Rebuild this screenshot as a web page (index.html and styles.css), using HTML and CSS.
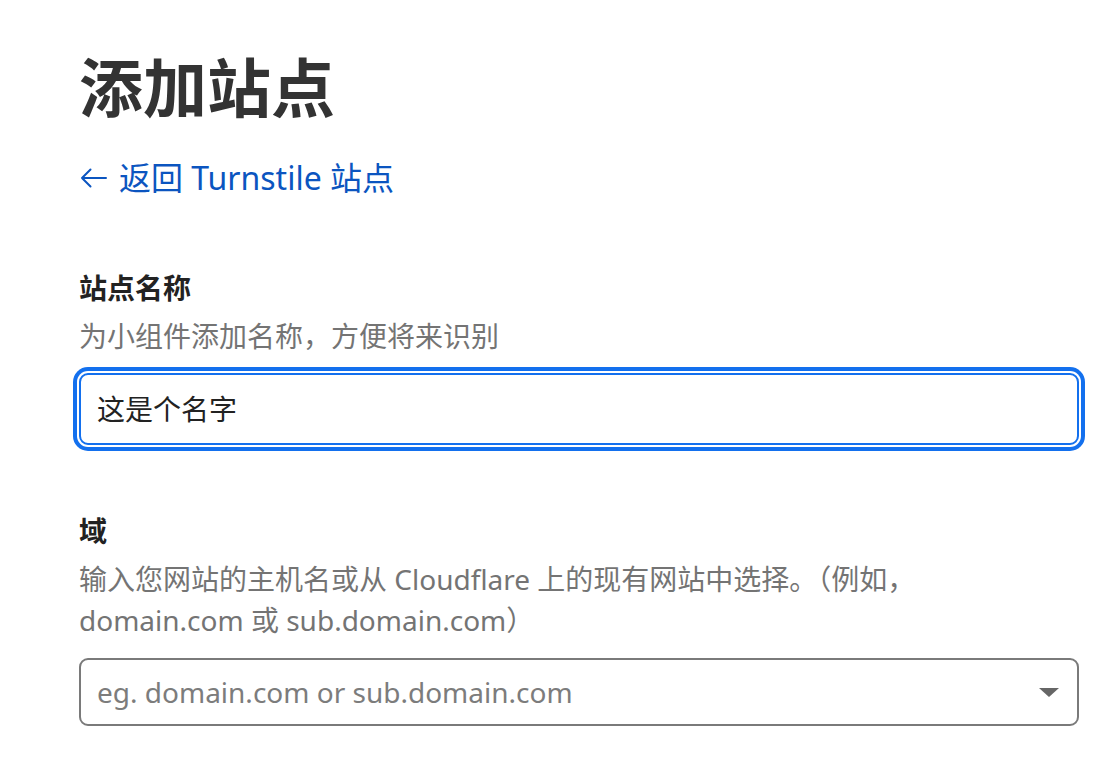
FILE: index.html
```html
<!DOCTYPE html>
<html lang="zh-CN">
<head>
<meta charset="utf-8">
<title>添加站点</title>
<link rel="stylesheet" href="styles.css">
</head>
<body>
<main class="page">
  <h1 class="title">添加站点</h1>
  <a class="back-link" href="#">
    <svg class="back-arrow" width="27" height="20" viewBox="0 0 27 20" aria-hidden="true">
      <path d="M26 10H2M10.5 1.5L2 10l8.5 8.5" fill="none" stroke="currentColor" stroke-width="2" stroke-linecap="round" stroke-linejoin="round"/>
    </svg>
    <span>返回 Turnstile 站点</span>
  </a>

  <section class="field field-name">
    <label class="field-label" for="site-name">站点名称</label>
    <p class="field-desc">为小组件添加名称，方便将来识别</p>
    <div class="input-box input-focused">
      <input id="site-name" class="input" type="text" value="这是个名字">
    </div>
  </section>

  <section class="field field-domain">
    <label class="field-label" for="domain">域</label>
    <p class="field-desc">输入您网站的主机名或从 Cloudflare 上的现有网站中选择。（例如，domain.com 或 sub.domain.com）</p>
    <div class="input-box select-box">
      <input id="domain" class="input" type="text" placeholder="eg. domain.com or sub.domain.com">
      <span class="caret" aria-hidden="true"></span>
    </div>
  </section>
</main>
</body>
</html>
```

FILE: styles.css
```css
* { box-sizing: border-box; }

html, body {
  margin: 0;
  padding: 0;
  background: #ffffff;
}

body {
  font-family: "Noto Sans", "Noto Sans CJK SC", sans-serif;
  color: #2b2b2b;
}

.page {
  padding: 44px 0 0 79px;
  width: 1078px;
}

.title {
  margin: 0;
  font-family: "Noto Sans CJK SC", sans-serif;
  font-size: 64px;
  line-height: 80px;
  font-weight: 700;
  color: #333333;
}

.back-link {
  margin-top: 34px;
  display: flex;
  align-items: center;
  gap: 12px;
  height: 40px;
  font-size: 32px;
  line-height: 40px;
  color: #0b55c0;
  text-decoration: none;
}

.back-arrow {
  flex: none;
  margin-left: 1px;
}

.field-name { margin-top: 69px; }
.field-domain { margin-top: 65px; }

.field-label {
  display: block;
  font-family: "Noto Sans CJK SC", sans-serif;
  font-size: 28px;
  line-height: 40px;
  font-weight: 700;
  color: #222222;
}

.field-desc {
  margin: 9px 0 16px;
  font-size: 28px;
  line-height: 41px;
  color: #747474;
  width: 1000px;
}

.input-box {
  display: flex;
  align-items: center;
  width: 1000px;
  height: 72px;
  border: 2px solid #7a7a7a;
  border-radius: 9px;
  padding: 0 16px;
  background: #ffffff;
}

.input-focused {
  border-color: #1370ee;
  box-shadow: 0 0 0 2px #ffffff, 0 0 0 6px #1370ee;
}

.select-box {
  height: 68px;
  margin-top: 17px;
}

.field-domain .field-desc { margin-bottom: 0; }

.input {
  flex: 1;
  min-width: 0;
  border: 0;
  outline: none;
  padding: 0;
  margin: 0;
  background: transparent;
  font-family: "Noto Sans", "Noto Sans CJK SC", sans-serif;
  font-size: 28px;
  line-height: 40px;
  color: #222222;
}

.input::placeholder {
  color: #7c7c7c;
  opacity: 1;
}

.caret {
  flex: none;
  width: 0;
  height: 0;
  margin-right: 2px;
  border-left: 10px solid transparent;
  border-right: 10px solid transparent;
  border-top: 9px solid #666666;
}
```
